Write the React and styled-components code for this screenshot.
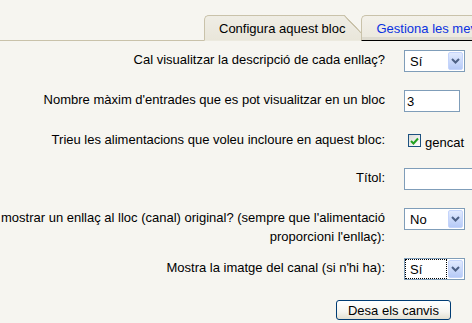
import React from 'react'
import styled, { createGlobalStyle } from 'styled-components'

const GlobalStyle = createGlobalStyle`
    html, body {
        margin: 0;
        padding: 0;
        background: #f6f5f0;
        overflow: hidden;
    }
    body {
        font-family: 'Liberation Sans', Arial, sans-serif;
        font-size: 13px;
        color: #000;
    }
`

const Page = styled.div`
    width: 472px;
    height: 323px;
    overflow: hidden;
`

const TabBar = styled.div`
    display: flex;
    align-items: flex-end;
    height: 40px;
    padding-left: 204px;
    border-bottom: 1px solid #c9c2aa;
    white-space: nowrap;
`

const Tab = styled.div`
    position: relative;
    display: flex;
    align-items: center;
    flex-shrink: 0;
    height: 26px;
    margin-bottom: -1px;
    padding: 0 ${({ $active }) => ($active ? '16px' : '14px')} 0 14px;
    box-sizing: border-box;
    border: 1px solid #c9c2aa;
    border-right: none;
    border-bottom: ${({ $active }) => ($active ? '1px solid #eceadf' : '1px solid #000')};
    border-top-left-radius: 5px;
    background: ${({ $active }) =>
        $active
            ? 'linear-gradient(#efede5, #e9e6da)'
            : 'linear-gradient(#f3f1ea, #ebe8de)'};
    box-shadow: ${({ $active }) => ($active ? 'none' : 'inset 0 -3px 0 #dedbd0')};
    color: ${({ $active }) => ($active ? '#000' : '#0a32e0')};
    z-index: ${({ $active }) => ($active ? 1 : 2)};

    &::after {
        content: '';
        display: ${({ $active }) => ($active ? 'block' : 'none')};
        position: absolute;
        top: -1px;
        right: 0;
        width: 17px;
        height: 18px;
        background: linear-gradient(
            to top right,
            transparent calc(50% - 0.8px),
            #c9c2aa calc(50% - 0.5px),
            #c9c2aa calc(50% + 0.5px),
            #f6f5f0 calc(50% + 0.8px)
        );
    }
`

const Form = styled.div`
    padding-top: 9px;
`

const Row = styled.div`
    display: grid;
    grid-template-columns: 385px 1fr;
    column-gap: 19px;
    align-items: start;
    min-height: ${({ $height }) => $height || 22}px;
    margin-bottom: ${({ $space }) => ($space ?? 18)}px;
`

const Label = styled.div`
    text-align: right;
    line-height: 19px;
    white-space: nowrap;
`

const Control = styled.div`
    display: flex;
    align-items: flex-start;
`

const Select = styled.div`
    display: flex;
    align-items: stretch;
    width: 61px;
    height: 22px;
    box-sizing: border-box;
    border: 1px solid #7f9db9;
    background: #fff;
`

const Value = styled.span`
    flex: 1;
    display: flex;
    align-items: center;
    margin: 1px;
    padding-left: 4px;
    outline: ${({ $focused }) => ($focused ? '1px dotted #000' : 'none')};
    outline-offset: 0;
`

const Arrow = styled.span`
    display: grid;
    place-items: center;
    width: 15px;
    margin: 1px;
    box-sizing: border-box;
    border: 1px solid #c4d4fb;
    border-radius: 2px;
    background: linear-gradient(#e1eafe, #b6caf7);
    color: #4d6185;
`

const TextInput = styled.div`
    display: flex;
    align-items: center;
    width: ${({ $width }) => $width}px;
    height: 22px;
    box-sizing: border-box;
    border: 1px solid #7f9db9;
    background: #fff;
    padding-left: 2px;
    flex-shrink: 0;
`

const CheckLabel = styled.label`
    display: flex;
    align-items: flex-end;
    gap: 4px;
    padding: 4px 0 0 4px;
    line-height: 15px;
`

const CheckBox = styled.span`
    display: grid;
    place-items: center;
    width: 13px;
    height: 13px;
    box-sizing: border-box;
    border: 1px solid #1c5180;
    background: linear-gradient(135deg, #dcdcd7, #fff);
    margin-bottom: 3px;
`

const Footer = styled.div`
    display: flex;
    justify-content: flex-end;
    padding: 1px 21px 0 0;
`

const Button = styled.button`
    width: 115px;
    height: 20px;
    border: 1px solid #003c74;
    border-radius: 3px;
    background: linear-gradient(#ffffff 0%, #f6f5f0 60%, #e3e0d2 100%);
    font-family: 'Liberation Sans', Arial, sans-serif;
    font-size: 13px;
    color: #000;
    padding: 0;
`

const Chevron = () => (
    <svg width="9" height="6" viewBox="0 0 9 6">
        <path d="M1 1 L4.5 4.5 L8 1" fill="none" stroke="currentColor" strokeWidth="2" />
    </svg>
)

const Check = () => (
    <svg width="9" height="8" viewBox="0 0 9 8">
        <path d="M1 4 L3.5 6.5 L8 1.5" fill="none" stroke="#21a121" strokeWidth="2" />
    </svg>
)

const Dropdown = ({ value, focused }) => (
    <Select>
        <Value $focused={focused}>{value}</Value>
        <Arrow>
            <Chevron />
        </Arrow>
    </Select>
)

const App = () => {
    return (
        <Page>
            <GlobalStyle />
            <TabBar>
                <Tab $active>Configura aquest bloc</Tab>
                <Tab>Gestiona les meves alimentacions</Tab>
            </TabBar>

            <Form>
                <Row>
                    <Label>Cal visualitzar la descripció de cada enllaç?</Label>
                    <Control>
                        <Dropdown value="Sí" />
                    </Control>
                </Row>

                <Row>
                    <Label>Nombre màxim d'entrades que es pot visualitzar en un bloc</Label>
                    <Control>
                        <TextInput $width={56}>3</TextInput>
                    </Control>
                </Row>

                <Row $height={20}>
                    <Label>Trieu les alimentacions que voleu incloure en aquest bloc:</Label>
                    <Control>
                        <CheckLabel>
                            <CheckBox>
                                <Check />
                            </CheckBox>
                            gencat
                        </CheckLabel>
                    </Control>
                </Row>

                <Row>
                    <Label>Títol:</Label>
                    <Control>
                        <TextInput $width={160} />
                    </Control>
                </Row>

                <Row $height={38} $space={12}>
                    <Label>
                        mostrar un enllaç al lloc (canal) original? (sempre que l'alimentació
                        <br />
                        proporcioni l'enllaç):
                    </Label>
                    <Control>
                        <Dropdown value="No" />
                    </Control>
                </Row>

                <Row $space={19}>
                    <Label>Mostra la imatge del canal (si n'hi ha):</Label>
                    <Control>
                        <Dropdown value="Sí" focused />
                    </Control>
                </Row>

                <Footer>
                    <Button type="button">Desa els canvis</Button>
                </Footer>
            </Form>
        </Page>
    )
}

export default App
